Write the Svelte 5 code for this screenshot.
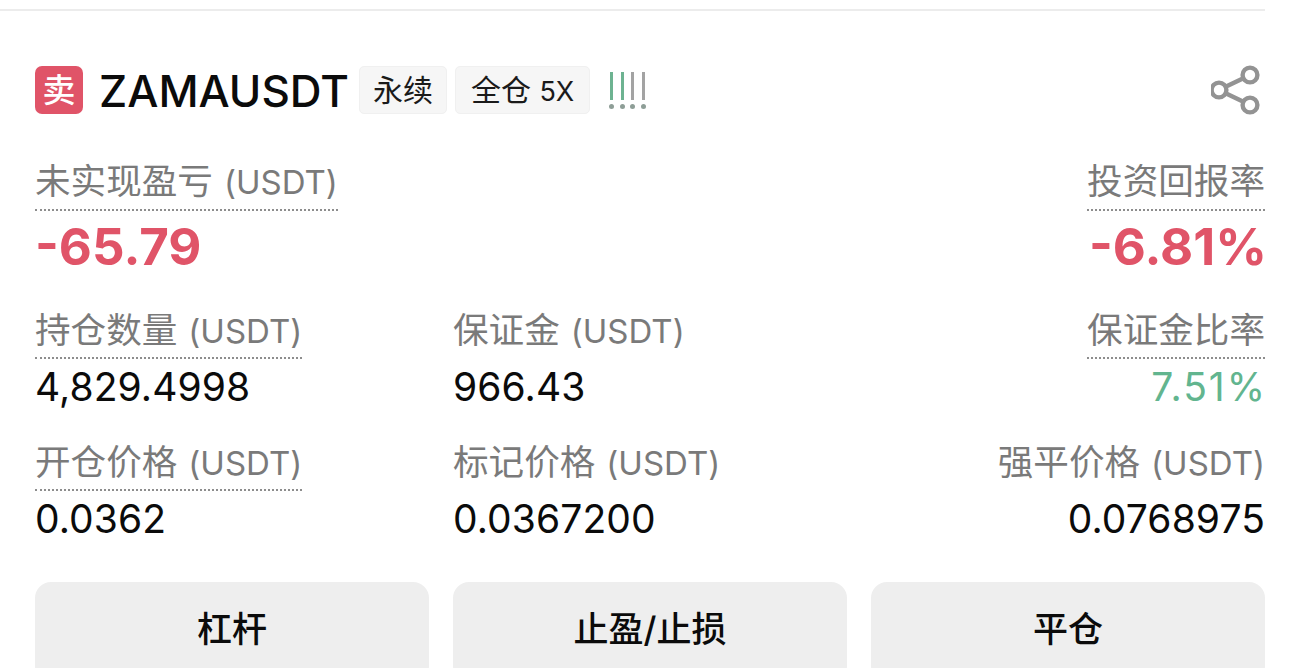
<script>
  const rows = [
    [
      { label: '持仓数量', unit: '(USDT)', value: '4,829.4998', dashed: true },
      { label: '保证金', unit: '(USDT)', value: '966.43' },
      { label: '保证金比率', value: '7.51%', dashed: true, up: true }
    ],
    [
      { label: '开仓价格', unit: '(USDT)', value: '0.0362', dashed: true },
      { label: '标记价格', unit: '(USDT)', value: '0.0367200' },
      { label: '强平价格', unit: '(USDT)', value: '0.0768975' }
    ]
  ];
  const actions = ['杠杆', '止盈/止损', '平仓'];
</script>

<div class="page">
  <div class="divider"></div>

  <div class="card">
    <header class="head">
      <span class="side">卖</span>
      <span class="symbol">ZAMAUSDT</span>
      <span class="tag tag-first">永续</span>
      <span class="tag">全仓 <em>5X</em></span>
      <span class="signal">
        <i class="green"></i><i class="green"></i><i></i><i></i>
      </span>
      <svg class="share" viewBox="0 0 54 50" width="54" height="50" fill="none" stroke="#939393" stroke-width="4.4">
        <circle cx="8" cy="25" r="7.4" />
        <circle cx="39" cy="10" r="7.4" />
        <circle cx="39" cy="40" r="7.4" />
        <path d="M14.6 21.8 32.4 13.2M14.6 28.2 32.4 36.8" />
      </svg>
    </header>

    <div class="summary">
      <div class="cell">
        <span class="label dashed">未实现盈亏<span class="unit">(USDT)</span></span>
        <span class="big">-65.79</span>
      </div>
      <div class="cell right">
        <span class="label dashed">投资回报率</span>
        <span class="big">-6.81%</span>
      </div>
    </div>

    {#each rows as row, r}
      <div class="grid" class:first={r === 0}>
        {#each row as item, i}
          <div class="cell" class:right={i === 2}>
            <span class="label" class:dashed={item.dashed}>{item.label}{#if item.unit}<span class="unit">{item.unit}</span>{/if}</span>
            <span class="value" class:up={item.up}>{item.value}</span>
          </div>
        {/each}
      </div>
    {/each}

    <div class="grid actions">
      {#each actions as action}
        <button>{action}</button>
      {/each}
    </div>
  </div>
</div>

<style>
  :global(body) {
    margin: 0;
    background: #fff;
  }

  .page {
    width: 1310px;
    height: 668px;
    overflow: hidden;
    font-family: Inter, "Noto Sans CJK SC", sans-serif;
    padding-top: 9px;
    box-sizing: border-box;
  }

  .divider {
    width: 1265px;
    height: 2px;
    background: #ececec;
  }

  .card {
    width: 1230px;
    margin-left: 35px;
  }

  .head {
    display: flex;
    align-items: center;
    height: 50px;
    margin-top: 54px;
  }

  .side {
    width: 48px;
    height: 48px;
    border-radius: 7px;
    background: #e05468;
    color: #fff;
    font-size: 33px;
    font-weight: 500;
    line-height: 48px;
    text-align: center;
  }

  .symbol {
    margin-left: 16px;
    font-size: 44px;
    font-weight: 500;
    color: #0b0b0b;
    position: relative;
    top: 1px;
  }

  .tag {
    height: 48px;
    margin-left: 8px;
    padding: 0 15px;
    box-sizing: border-box;
    border-radius: 5px;
    border: 1px solid #f0f0f0;
    background: #f6f6f6;
    color: #1a1a1a;
    font-size: 30px;
    line-height: 46px;
  }

  .tag em {
    font-style: normal;
    font-size: 27px;
  }

  .tag-first {
    margin-left: 10px;
    padding: 0 13px;
  }

  .signal {
    display: flex;
    gap: 5.5px;
    margin-left: 19px;
  }

  .signal i {
    position: relative;
    display: block;
    width: 5px;
    height: 28px;
    margin-bottom: 9px;
    background: linear-gradient(#a3a3a3, #a3a3a3) center / 3px 100% no-repeat;
  }

  .signal i::after {
    content: '';
    position: absolute;
    left: 0;
    bottom: -9px;
    width: 5px;
    height: 5px;
    border-radius: 50%;
    background: #8e9e97;
  }

  .signal i.green {
    background-image: linear-gradient(#6db391, #6db391);
  }

  .share {
    margin-left: auto;
  }

  .summary {
    display: flex;
    justify-content: space-between;
    margin-top: 45px;
  }

  .cell {
    display: flex;
    flex-direction: column;
    align-items: flex-start;
  }

  .cell.right {
    align-items: flex-end;
  }

  .label {
    font-size: 35.6px;
    line-height: 44px;
    color: #7a7a7a;
    border-bottom: 2px dotted transparent;
    padding-bottom: 4px;
    white-space: nowrap;
  }

  .summary .label {
    padding-bottom: 5px;
  }

  .label.dashed {
    border-bottom-color: #8d8d8d;
  }

  .unit {
    font-size: 33px;
    margin-left: 11px;
  }

  .big {
    margin-top: 3px;
    font-size: 51px;
    line-height: 66px;
    font-weight: 700;
    color: #e05468;
  }

  .right .big {
    margin-right: -2px;
  }

  .grid {
    display: grid;
    grid-template-columns: repeat(3, 394px);
    gap: 24px;
    margin-top: 27px;
  }

  .grid.first {
    margin-top: 29px;
  }

  .value {
    font-size: 39px;
    line-height: 54px;
    margin-top: 1px;
    letter-spacing: 0.1px;
    color: #0b0b0b;
  }

  .value.up {
    color: #62b58f;
    letter-spacing: 2px;
    margin-right: -2px;
  }

  .actions {
    margin-top: 36px;
  }

  button {
    height: 100px;
    border: 0;
    border-radius: 16px;
    background: #eeeeee;
    font-family: inherit;
    font-size: 35px;
    font-weight: 500;
    color: #0b0b0b;
    padding: 0 0 12px;
  }
</style>
